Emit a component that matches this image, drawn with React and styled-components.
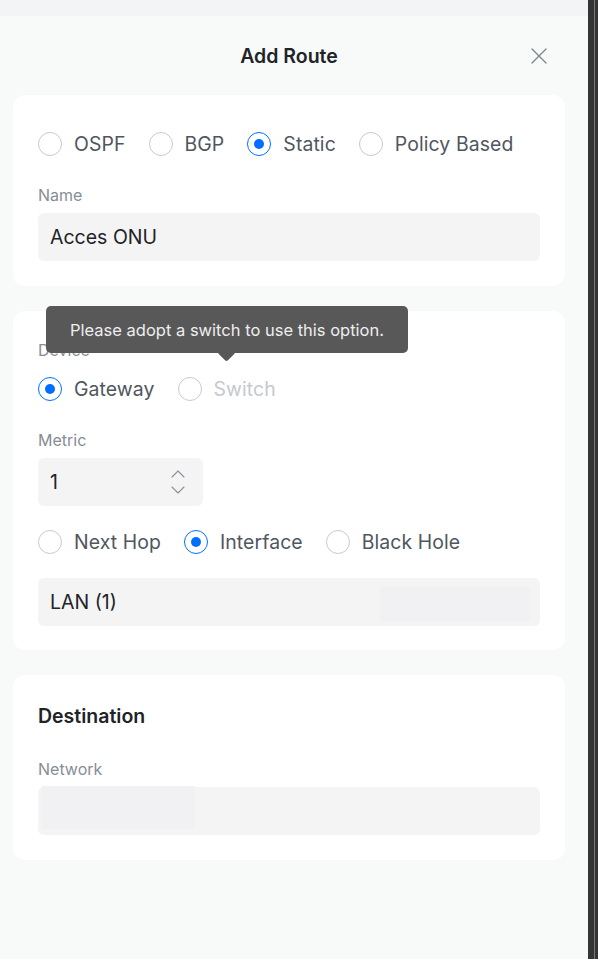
import React from "react";
import styled, { createGlobalStyle } from "styled-components";

const Global = createGlobalStyle`
  html, body { margin: 0; padding: 0; height: 100%; }
  body { font-family: Inter, "Noto Sans", sans-serif; background: #f8f9f9; }
  #root { height: 100%; }
`;

const Page = styled.div`
  display: flex;
  height: 959px;
  width: 598px;
  overflow: hidden;
`;

const Panel = styled.div`
  flex: 1;
  display: flex;
  flex-direction: column;
  background: #f8f9f9;
`;

const TopBar = styled.div`
  height: 16px;
  background: #f3f4f5;
`;

const Strip = styled.div`
  width: 10px;
  background: #343434;
  display: flex;
  justify-content: flex-end;
  padding-right: 3px;
  box-sizing: border-box;
`;

const StripLine = styled.div`
  width: 1px;
  background: #7a7a7a;
`;

const Header = styled.div`
  height: 79px;
  display: flex;
  align-items: center;
  justify-content: center;
  position: relative;
  width: 552px;
  margin-left: 13px;
`;

const Title = styled.h1`
  margin: 0;
  font-size: 19.5px;
  font-weight: 600;
  color: #212327;
`;

const Close = styled.button`
  position: absolute;
  right: 18px;
  top: 32px;
  width: 16px;
  height: 16px;
  padding: 0;
  border: none;
  background: none;
  display: flex;
`;

const Cards = styled.div`
  display: flex;
  flex-direction: column;
  gap: 25px;
  padding: 0 23px 0 13px;
`;

const Card = styled.section`
  background: #ffffff;
  border-radius: 12px;
  padding: ${(p) => p.$pt || 29}px 25px ${(p) => p.$pb || 25}px;
  display: flex;
  flex-direction: column;
`;

const RadioRow = styled.div`
  display: flex;
  align-items: center;
  height: 40px;
  gap: 23px;
  margin-bottom: ${(p) => p.$mb || 0}px;
`;

const RadioItem = styled.label`
  display: flex;
  align-items: center;
  gap: 12px;
  font-size: 19.4px;
  color: ${(p) => (p.$disabled ? "#c5c9ce" : "#50565e")};
  letter-spacing: 0.1px;
`;

const Circle = styled.span`
  width: 24px;
  height: 24px;
  box-sizing: border-box;
  border-radius: 50%;
  border: 1px solid ${(p) => (p.$on ? "#006fff" : "#c7cace")};
  display: flex;
  align-items: center;
  justify-content: center;
  &::after {
    content: "";
    width: 10px;
    height: 10px;
    border-radius: 50%;
    background: #006fff;
    display: ${(p) => (p.$on ? "block" : "none")};
  }
`;

const Label = styled.div`
  font-size: 16px;
  line-height: 20px;
  color: #878d96;
  margin-top: ${(p) => p.$mt || 0}px;
  margin-bottom: ${(p) => p.$mb || 8}px;
`;

const Input = styled.div`
  height: 48px;
  width: ${(p) => p.$w || "100%"};
  box-sizing: border-box;
  background: #f4f4f5;
  border-radius: 6px;
  display: flex;
  align-items: center;
  justify-content: space-between;
  padding: 0 ${(p) => (p.$flush ? 0 : 12)}px;
  font-size: 19.5px;
  color: #212327;
  margin-bottom: ${(p) => p.$mb || 0}px;
`;

const Ghost = styled.div`
  background: #f1f1f3;
  width: ${(p) => p.$w}px;
  height: ${(p) => p.$h}px;
  align-self: ${(p) => (p.$top ? "flex-start" : "center")};
  margin: ${(p) => p.$m || "0"};
`;

const Spinner = styled.div`
  display: flex;
  flex-direction: column;
  gap: 8px;
  margin-right: 6px;
`;

const Heading = styled.h2`
  margin: 0;
  font-size: 19.5px;
  line-height: 22px;
  font-weight: 600;
  color: #212327;
`;

const TooltipWrap = styled.div`
  position: relative;
`;

const Tooltip = styled.div`
  position: absolute;
  left: 8px;
  top: -34px;
  width: 362px;
  height: 47px;
  box-sizing: border-box;
  background: #585858;
  border-radius: 5px;
  color: #eeeeee;
  font-size: 16.5px;
  display: flex;
  align-items: center;
  justify-content: center;
  z-index: 2;
  &::after {
    content: "";
    position: absolute;
    left: 174px;
    bottom: -6px;
    width: 13px;
    height: 13px;
    background: #585858;
    transform: rotate(45deg);
    border-radius: 2px;
  }
`;

const Radio = ({ on, disabled, children }) => (
  <RadioItem $disabled={disabled}>
    <Circle $on={on} />
    {children}
  </RadioItem>
);

const Chevron = ({ up }) => (
  <svg width="14" height="8" viewBox="0 0 14 8" fill="none">
    <path
      d={up ? "M1 7L7 1L13 7" : "M1 1L7 7L13 1"}
      stroke="#8a9099"
      strokeWidth="1.1"
      strokeLinecap="round"
      strokeLinejoin="round"
    />
  </svg>
);

export default function App() {
  return (
    <Page>
      <Global />
      <Panel>
        <TopBar />
        <Header>
          <Title>Add Route</Title>
          <Close aria-label="close">
            <svg width="16" height="16" viewBox="0 0 16 16" fill="none">
              <path d="M1 1L15 15M15 1L1 15" stroke="#7e848c" strokeWidth="1.3" strokeLinecap="round" />
            </svg>
          </Close>
        </Header>
        <Cards>
          <Card>
            <RadioRow>
              <Radio>OSPF</Radio>
              <Radio>BGP</Radio>
              <Radio on>Static</Radio>
              <Radio>Policy Based</Radio>
            </RadioRow>
            <Label $mt={21}>Name</Label>
            <Input>Acces ONU</Input>
          </Card>

          <Card $pb={24}>
            <TooltipWrap>
              <Tooltip>Please adopt a switch to use this option.</Tooltip>
            </TooltipWrap>
            <Label $mb={9}>Device</Label>
            <RadioRow>
              <Radio on>Gateway</Radio>
              <Radio disabled>Switch</Radio>
            </RadioRow>
            <Label $mt={21}>Metric</Label>
            <Input $w="165px" $mb={16}>
              1
              <Spinner>
                <Chevron up />
                <Chevron />
              </Spinner>
            </Input>
            <RadioRow $mb={16}>
              <Radio>Next Hop</Radio>
              <Radio on>Interface</Radio>
              <Radio>Black Hole</Radio>
            </RadioRow>
            <Input>
              LAN (1)
              <Ghost $w={150} $h={36} $m="4px -2px 0 0" />
            </Input>
          </Card>

          <Card $pt={30}>
            <Heading>Destination</Heading>
            <Label $mt={32}>Network</Label>
            <Input $flush>
              <Ghost $w={153} $h={43} $top $m="-1px 0 0 4px" />
            </Input>
          </Card>
        </Cards>
      </Panel>
      <Strip>
        <StripLine />
      </Strip>
    </Page>
  );
}
